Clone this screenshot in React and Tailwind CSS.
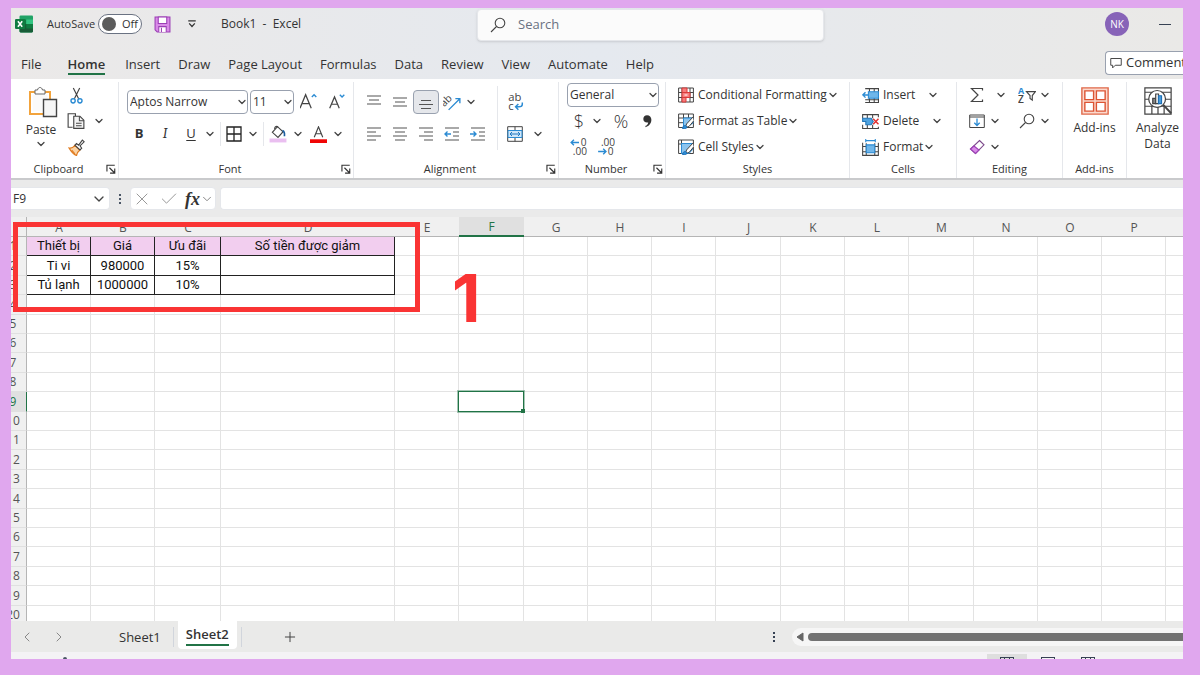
import clsx from 'clsx'
import { ChevronDown, ChevronLeft, ChevronRight, Check, X, Plus } from 'lucide-react'

const TABS = ['File', 'Home', 'Insert', 'Draw', 'Page Layout', 'Formulas', 'Data', 'Review', 'View', 'Automate', 'Help']

const COLUMNS = [
  { name: 'A', width: 'w-[64px]' },
  { name: 'B', width: 'w-[64px]' },
  { name: 'C', width: 'w-[66px]' },
  { name: 'D', width: 'w-[174px]' },
  { name: 'E', width: 'w-[64px]' },
  { name: 'F', width: 'w-[65px]' },
  { name: 'G', width: 'w-[64px]' },
  { name: 'H', width: 'w-[64px]' },
  { name: 'I', width: 'w-[64px]' },
  { name: 'J', width: 'w-[65px]' },
  { name: 'K', width: 'w-[64px]' },
  { name: 'L', width: 'w-[64px]' },
  { name: 'M', width: 'w-[65px]' },
  { name: 'N', width: 'w-[64px]' },
  { name: 'O', width: 'w-[64px]' },
  { name: 'P', width: 'w-[64px]' },
  { name: 'Q', width: 'w-[64px]' },
]

const DATA = [
  ['Thiết bị', 'Giá', 'Ưu đãi', 'Số tiền được giảm'],
  ['Ti vi', '980000', '15%', ''],
  ['Tủ lạnh', '1000000', '10%', ''],
]

const ROWS = Array.from({ length: 20 }, (_, i) => i + 1)

const Svg = ({ size = 16, children, ...rest }) => (
  <svg
    width={size}
    height={size}
    viewBox="0 0 16 16"
    fill="none"
    stroke="#444"
    className="shrink-0"
    aria-hidden="true"
    {...rest}
  >
    {children}
  </svg>
)

const ExcelIcon = () => (
  <Svg size={18} stroke="none">
    <rect x="4" y="0.5" width="12" height="15" rx="1" fill="#21a366" />
    <path d="M4 4h6v4H4z" fill="#107c41" />
    <path d="M10 4h6v4h-6z" fill="#33c481" />
    <path d="M4 8h12v6.500a1 1 0 0 1-1 1H5a1 1 0 0 1-1-1z" fill="#185c37" />
    <path d="M10 8h6v4h-6z" fill="#107c41" />
    <rect x="0" y="3.500" width="9" height="9" rx="1" fill="#107c41" />
    <path d="M2.600 5.500l3.800 5M6.400 5.500l-3.800 5" stroke="#fff" strokeWidth="1.400" />
  </Svg>
)

const SaveIcon = () => (
  <Svg size={17} stroke="#9b3fb5">
    <path d="M1 1h14v14H3l-2-2z" fill="#d98be8" />
    <path d="M4 1h8v6H4z" fill="#fff" />
    <path d="M4.500 15v-5h7v5" fill="#fff" />
    <path d="M7 11v4" />
  </Svg>
)

const QuickAccessIcon = () => (
  <Svg size={10} stroke="#333" strokeWidth="2">
    <path d="M2 3h12M3.500 7l4.500 5 4.500-5" />
  </Svg>
)

const SearchIcon = ({ size = 16 }) => (
  <Svg size={size} strokeWidth="1.100">
    <circle cx="10" cy="6" r="4.800" />
    <path d="M6.500 9.500L1 15" />
  </Svg>
)

const CommentIcon = () => (
  <Svg size={12} strokeWidth="1.300">
    <path d="M1 2h14v9H7l-3.500 3.500V11H1z" />
  </Svg>
)

const PasteIcon = () => (
  <svg width="34" height="32" viewBox="-4 0 34 32" fill="none" aria-hidden="true">
    <path d="M2 6h20v22H2z" fill="#fff" stroke="#f2a33c" strokeWidth="2" />
    <path d="M4.500 8.500h15v17h-15z" fill="#fafafa" />
    <path d="M7 8V4h2.500c.5-2 1.500-2.500 2.500-2.500s2 .5 2.500 2.500H17v4z" fill="#fff" stroke="#666" />
    <path d="M15.500 13.500h13v17h-13z" fill="#f6f6f6" stroke="#444" strokeWidth="1.400" />
  </svg>
)

const CutIcon = () => (
  <Svg size={17}>
    <path d="M5 1l5 10M11 1L6 11" strokeWidth="1.100" />
    <circle cx="4.800" cy="13" r="2" stroke="#2b8bd3" strokeWidth="1.300" />
    <circle cx="11.200" cy="13" r="2" stroke="#2b8bd3" strokeWidth="1.300" />
  </Svg>
)

const CopyIcon = () => (
  <Svg size={18}>
    <path d="M5 13.500H1v-12h6.500v2" />
    <path d="M6 3.800h5.500L15 7.300v7.200H6z" fill="#f4f4f4" />
    <path d="M11 4v3.800h4M8 10h5M8 12.300h5" strokeWidth="0.900" />
  </Svg>
)

const PainterIcon = () => (
  <Svg size={17}>
    <path d="M1 8.500c2.200.4 4-.6 5.500-2.500l4.500 4.500c-1.600 1.200-2.800 2.800-3 5-2.800-.8-5-3.500-7-7z" fill="#fbd3a4" stroke="#e07b1f" strokeWidth="1.200" />
    <path d="M3.500 10.500l3 3.500" stroke="#e07b1f" />
    <path d="M6.500 5.800l1.500-1.500 2 1.500L13.500 1l1.700 1.600-3.900 3.900 1.600 2.200-1.600 1.600z" fill="#fff" />
  </Svg>
)

const FontSizeIcon = ({ up }) => (
  <Svg size={18}>
    <path d={up ? 'M0 13.500L5 1.500l5 12M1.700 9.500h6.600' : 'M1.500 13.500L5.800 3.500l4.200 10M3 10h5.500'} strokeWidth="1.100" />
    <path d={up ? 'M10.500 3.500L12.500 1.500l2 2' : 'M10.500 1.500L12.500 3.500l2-2'} stroke="#2b8bd3" strokeWidth="1.200" />
  </Svg>
)

const BordersIcon = () => (
  <Svg stroke="#222" strokeWidth="1.300">
    <path d="M1 1h14v14H1zM8 1v14M1 8h14" />
  </Svg>
)

const FillIcon = () => (
  <Svg size={18}>
    <path d="M7.500 1.500l5 4.500-4.500 5-5-4.500z" />
    <path d="M5 3.500c0-2 2-3 3-1.500" />
    <path d="M12 5c1.600.5 2 2.500 1.700 5" stroke="#1d5fa0" strokeWidth="1.500" />
    <path d="M0.500 12h15v3.500h-15z" fill="#eabff0" stroke="none" />
  </Svg>
)

const FontColorIcon = () => (
  <Svg size={17}>
    <path d="M4 10.500L8 .8l4 9.700M5.500 7.300h5" strokeWidth="1.100" />
    <path d="M0 12.500h16v3.500H0z" fill="#f00505" stroke="none" />
  </Svg>
)

const LINES = {
  top: 'M1 2h14M3 6h10M1 10h14',
  middle: 'M1 4h14M3 8h10M1 12h14',
  bottom: 'M3 6.500h10M1 10.500h14M3 14.500h10',
  left: 'M1 2h14M1 6h9M1 10h14M1 14h9',
  center: 'M1 2h14M3 6h10M1 10h14M3 14h10',
  right: 'M1 2h14M6 6h9M1 10h14M6 14h9',
}

const LinesIcon = ({ kind }) => (
  <Svg stroke="#555" strokeWidth="1.200">
    <path d={LINES[kind]} />
  </Svg>
)

const IndentIcon = ({ out }) => (
  <Svg stroke="#555" strokeWidth="1.200">
    <path d="M1 2h14M9 6h6M9 10h6M1 14h14" />
    <path d={out ? 'M7 8H1M3.500 5.500L1 8l2.500 2.500' : 'M0 8h6M3.500 5.500L6 8l-2.500 2.500'} stroke="#2b8bd3" strokeWidth="1.400" />
  </Svg>
)

const OrientationIcon = () => (
  <Svg size={18}>
    <text x="-2" y="9" fontSize="9" fontFamily="Open Sans" fill="#444" stroke="none" transform="rotate(-45 4 7)">ab</text>
    <path d="M5 15L14.500 5.500M11 5h4v4" stroke="#2b8bd3" strokeWidth="1.200" />
  </Svg>
)

const WrapIcon = () => (
  <Svg size={18}>
    <text x="2" y="7.500" fontSize="10" fontFamily="Open Sans" fill="#444" stroke="none">ab</text>
    <text x="2" y="15" fontSize="10" fontFamily="Open Sans" fill="#444" stroke="none">c</text>
    <path d="M14.500 8.500v1.500c0 1.500-1 2.300-3 2.300H8.500M11 9.800l-2.500 2.500 2.500 2.500" stroke="#2b8bd3" strokeWidth="1.300" />
  </Svg>
)

const MergeIcon = () => (
  <Svg>
    <path d="M.7.7h14.600v14.600H.7zM8 .7v3.500M8 12v3.500" />
    <path d="M1 4.500h14v7H1z" fill="#cfe6f8" stroke="#2b8bd3" />
    <path d="M3 8h10M5 6L3 8l2 2M11 6l2 2-2 2" stroke="#1f77c0" />
  </Svg>
)

const DecimalIcon = ({ more }) => (
  <Svg size={18}>
    <text x={more ? 9.500 : 3.500} y="7" fontSize="9" fontFamily="Open Sans" fill="#444" stroke="none">{more ? '0' : '.00'}</text>
    <text x={more ? 2.500 : 9.500} y="15" fontSize="9" fontFamily="Open Sans" fill="#444" stroke="none">{more ? '.00' : '0'}</text>
    <path d={more ? 'M8 4H1M3.500 1.500L1 4 3.500 6.500' : 'M1 12h7M5.500 9.500L8 12 5.500 14.500'} stroke="#2b8bd3" strokeWidth="1.200" />
  </Svg>
)

const ConditionalIcon = () => (
  <Svg>
    <path d="M.6 1h14.800v14H.6zM.6 5.500h14.800M.6 10.500h14.800M4 1v14M12 1v14" />
    <path d="M4 1h5v4.500H4zM4 5.500h8v5H4zM4 10.500h4V15H4z" fill="#f77c7c" stroke="#d83b3b" />
    <path d="M6.500 8h3" stroke="#fff" />
  </Svg>
)

const FormatTableIcon = ({ filled }) => (
  <Svg>
    <path d={filled ? 'M.6 1h14.800v13.500H.6zM.6 5h3M3.500 1v13.500' : 'M.6 1h14.800v13.500H.6zM.6 5h14.800M.6 9.700H10M5.500 1v13.500M10.500 1v6'} />
    <path d={filled ? 'M3.500 4.500h11v6L11 14.500H3.500z' : 'M5.500 5h9.500v5L8 14.500H5.500z'} fill="#8cc4ee" stroke="#2b8bd3" />
    <path d="M15.500 3.500L8.500 11l-1 3.500 3.500-1 5-6z" fill="#fff" />
    <path d="M4.500 15.500c0-2 1.500-3.200 3-3l1.500 1.500c0 1.500-2 2-4.500 1.500z" fill="#2b8bd3" stroke="#1f6fb5" />
  </Svg>
)

const InsertCellsIcon = () => (
  <Svg size={17}>
    <path d="M3 1.500h12.500v13H3M7 1.500v13M11.500 1.500v13M3 12h12.500" />
    <path d="M6 4.500h9.500v6H6z" fill="#6fb6ea" stroke="#2b8bd3" />
    <path d="M6 7.500H.8M3.300 5L.8 7.500 3.300 10" stroke="#2b8bd3" strokeWidth="1.300" />
  </Svg>
)

const DeleteCellsIcon = () => (
  <Svg size={17}>
    <path d="M.6 5V1.500h14.800V4M.6 11v3.500h14.800V13M5 1.500V5M10 1.500V5M5 11v3.500M10 11v3.500" />
    <path d="M.6 5h8l2 3-2 3h-5V8h-3z" fill="#4fa3e0" stroke="#2376b8" />
    <path d="M10.500 5.500l5 5M15.500 5.500l-5 5" stroke="#e03030" strokeWidth="1.400" />
  </Svg>
)

const FormatCellsIcon = () => (
  <Svg size={17}>
    <path d="M.6 3.500v11.900h14.800V3.500M.6 7h14.800M.6 12h14.800M4 4v11.400M12 4v11.400" />
    <path d="M4 5.500h8V13H4z" fill="#6fb6ea" stroke="#2b8bd3" />
    <path d="M3.500 1.500h9M3.500 0v3M12.500 0v3" stroke="#2b8bd3" />
  </Svg>
)

const SumIcon = () => (
  <Svg strokeWidth="1.200">
    <path d="M13.500 3.500V1.500h-11L9 8l-6.500 6.500h11v-2" />
  </Svg>
)

const SortIcon = () => (
  <Svg size={18}>
    <text x="0" y="7" fontSize="8" fontFamily="Open Sans" fontWeight="700" fill="#2b8bd3" stroke="none">A</text>
    <text x="0" y="15.500" fontSize="9" fontFamily="Open Sans" fontWeight="600" fill="#444" stroke="none">Z</text>
    <path d="M7.500 5h8L12.700 8.500v4l-2-1.500V8.500z" />
  </Svg>
)

const FillDownIcon = () => (
  <Svg>
    <path d="M.7 2h14.600v12.500H.7zM.7 4h14.600" />
    <path d="M8 5.500v7M5.300 9.800L8 12.500l2.700-2.700" stroke="#2b8bd3" strokeWidth="1.300" />
  </Svg>
)

const EraserIcon = () => (
  <Svg strokeWidth="1.100">
    <path d="M10.500 1.500l4.500 4.300-8.500 8.700-5-4.500z" fill="#fff" stroke="#7d4a8c" />
    <path d="M5 7l5 4-3.500 3.500-5-4.500z" fill="#d98be8" stroke="#9b3fb5" />
  </Svg>
)

const AddInsIcon = () => (
  <Svg size={28} stroke="#dc5433" strokeWidth="0.800">
    <path d="M.5.500h15v15H.5z" fill="#fbd9cd" stroke="#e0694a" />
    <path d="M2.200 2.200h5v5h-5zM8.800 2.200h5v5h-5zM2.200 8.800h5v5h-5zM8.800 8.800h5v5h-5z" fill="#fff" />
  </Svg>
)

const AnalyzeIcon = () => (
  <Svg size={28} strokeWidth="0.700">
    <path d="M.5.500h15v15H.5zM.5 3h15M.5 7h15M.5 11h15M4.500 11v4.500M8 11v4.500M11.500 11v4.500" />
    <circle cx="7.500" cy="6.800" r="4.800" fill="#fff" />
    <path d="M5 6.500h1.700v3H5z" fill="#888" />
    <path d="M6.700 4h1.600v5.500H6.700z" fill="#fff" />
    <path d="M8.300 5h1.700v4.500H8.300z" fill="#4fa3e0" stroke="#1f6fb5" />
    <path d="M11 10.200l4.500 4.800" strokeWidth="1.100" />
  </Svg>
)

const LauncherIcon = () => (
  <Svg size={10} stroke="#333" strokeWidth="1.800">
    <path d="M1.500 12V2H14M5.500 6l8 8M14 7v7.500H6.500" />
  </Svg>
)

const Caret = ({ label = 'More options', className }) => (
  <button type="button" aria-label={label} className={clsx('flex h-5 w-3 shrink-0 items-center justify-center', className)}>
    <ChevronDown size={12} strokeWidth={2.5} color="#444" />
  </button>
)

const Tool = ({ label, width = 'w-[26px]', active, children }) => (
  <button
    type="button"
    aria-label={label}
    className={clsx('flex h-6 shrink-0 items-center justify-center rounded', width, active && 'border border-gray-400 bg-gray-200')}
  >
    {children}
  </button>
)

const Group = ({ title, width, launcher, children }) => (
  <section className={clsx('flex shrink-0 flex-col border-r border-gray-200', width)}>
    <div className="h-[78px]">{children}</div>
    <div className="flex h-[18px] items-center">
      <h2 className="flex-1 text-center text-[11px]">{title}</h2>
      {
        launcher &&
        (
          <button type="button" aria-label={`${title} settings`} className="w-3">
            <LauncherIcon />
          </button>
        )
      }
    </div>
  </section>
)

const Dropdown = ({ label, value, width }) => (
  <div className={clsx('relative shrink-0', width)}>
    <select
      aria-label={label}
      defaultValue={value}
      className="block h-6 w-full appearance-none rounded border border-gray-400 bg-white pl-0.5 text-xs"
    >
      <option>{value}</option>
    </select>
    <ChevronDown size={12} strokeWidth={2.5} color="#444" className="pointer-events-none absolute right-0 top-1.5" />
  </div>
)

const LabelledTool = ({ icon, text, gap }) => (
  <div className="flex h-[26px] items-center">
    <button type="button" className="flex items-center gap-1 whitespace-nowrap">
      {icon}
      {text}
    </button>
    <Caret label={`${text} options`} className={gap} />
  </div>
)

const Divider = ({ className }) => <div className={clsx('w-px shrink-0 bg-gray-200', className)} />

const TitleBar = () => (
  <header className="flex h-10 items-start">
    <div className="flex h-8 w-[466px] shrink-0 items-center pl-1">
      <ExcelIcon />
      <span className="ml-3.5 w-[51px] text-[11px]">AutoSave</span>
      <button
        type="button"
        role="switch"
        aria-checked="false"
        aria-label="AutoSave"
        className="flex h-5 w-11 items-center gap-1.5 rounded-full border border-gray-500 bg-white pl-[3px] text-[11px]"
      >
        <span className="h-3.5 w-3.5 rounded-full bg-[#5c5c5c]" />
        Off
      </button>
      <button type="button" aria-label="Save" className="ml-3"><SaveIcon /></button>
      <button type="button" aria-label="Customize toolbar" className="ml-4"><QuickAccessIcon /></button>
      <h1 className="ml-6 whitespace-pre text-xs">Book1  -  Excel</h1>
    </div>
    <label className="mt-px flex h-8 w-[347px] shrink-0 items-center gap-3 rounded border border-gray-200 bg-[#fbfbfb] px-3 shadow">
      <SearchIcon />
      <input type="search" placeholder="Search" aria-label="Search" className="w-full text-[13px] outline-none placeholder:text-gray-500" />
    </label>
    <div className="ml-auto flex h-8 items-center">
      <button type="button" className="h-6 w-6 rounded-full bg-[#8763b8] text-[10px] text-white">NK</button>
      <button type="button" aria-label="Minimize" className="ml-[30px] mr-3 flex h-4 w-3 items-center">
        <span className="h-px w-full bg-gray-700" />
      </button>
    </div>
  </header>
)

const TabBar = () => (
  <nav className="flex h-[31px] items-start pl-2.5 text-[13px]">
    <div className="flex h-full gap-[18px] whitespace-nowrap">
      {TABS.map(t => (
        <a
          key={t}
          href="#"
          className={clsx('mt-1.5 h-[21px] leading-5', t === 'Home' && 'ml-2 mr-0.5 border-b-2 border-[#217346] font-semibold')}
        >
          {t}
        </a>
      ))}
    </div>
    <button
      type="button"
      className="ml-auto mt-[3px] flex h-6 w-[78px] items-center gap-1 overflow-hidden rounded-l border border-r-0 border-gray-400 bg-white pl-1"
    >
      <CommentIcon />
      Comment
    </button>
  </nav>
)

const Ribbon = () => (
  <div className="flex h-[101px] shrink-0 overflow-hidden border-b-2 border-[#c9cacc] bg-white pt-[3px] text-xs">
    <Group title="Clipboard" width="w-[108px]" launcher>
      <div className="flex h-full pl-4">
        <div className="flex w-7 flex-col items-center pt-1">
          <button type="button" className="flex flex-col items-center">
            <PasteIcon />
            <span className="mt-1">Paste</span>
          </button>
          <Caret label="Paste options" className="-mt-1" />
        </div>
        <div className="ml-2 flex flex-col">
          <div className="flex h-[26px] items-center"><Tool label="Cut"><CutIcon /></Tool></div>
          <div className="flex h-[26px] items-center">
            <Tool label="Copy"><CopyIcon /></Tool>
            <Caret label="Copy options" className="ml-1" />
          </div>
          <div className="flex h-[26px] items-center"><Tool label="Format Painter"><PainterIcon /></Tool></div>
        </div>
      </div>
    </Group>

    <Group title="Font" width="w-[235px]" launcher>
      <div className="pl-[7px] pt-1">
        <div className="flex h-8 items-center gap-0.5 pl-px">
          <Dropdown label="Font" value="Aptos Narrow" width="w-[121px]" />
          <Dropdown label="Font size" value="11" width="w-[44px]" />
          <Tool label="Increase font size"><FontSizeIcon up /></Tool>
          <Tool label="Decrease font size"><FontSizeIcon /></Tool>
        </div>
        <div className="flex h-8 items-center">
          <Tool label="Bold"><b className="text-[13px]">B</b></Tool>
          <Tool label="Italic"><i className="font-serif text-sm">I</i></Tool>
          <Tool label="Underline"><u className="text-[13px] underline-offset-2">U</u></Tool>
          <Caret label="Underline style" />
          <Divider className="ml-1 h-6" />
          <Tool label="Borders"><BordersIcon /></Tool>
          <Caret label="Border style" />
          <Divider className="ml-1 h-6" />
          <Tool label="Fill color" width="w-7"><FillIcon /></Tool>
          <Caret label="Fill color options" />
          <Tool label="Font color" width="w-7"><FontColorIcon /></Tool>
          <Caret label="Font color options" />
        </div>
      </div>
    </Group>

    <Group title="Alignment" width="w-[205px]" launcher>
      <div className="flex pl-[7px] pt-1">
        <div className="w-[136px]">
          <div className="flex h-8 items-center">
            <Tool label="Top align"><LinesIcon kind="top" /></Tool>
            <Tool label="Middle align"><LinesIcon kind="middle" /></Tool>
            <Tool label="Bottom align" active><LinesIcon kind="bottom" /></Tool>
            <Tool label="Orientation"><OrientationIcon /></Tool>
            <Caret label="Orientation options" />
          </div>
          <div className="flex h-8 items-center">
            <Tool label="Align left"><LinesIcon kind="left" /></Tool>
            <Tool label="Center"><LinesIcon kind="center" /></Tool>
            <Tool label="Align right"><LinesIcon kind="right" /></Tool>
            <Tool label="Decrease indent"><IndentIcon out /></Tool>
            <Tool label="Increase indent"><IndentIcon /></Tool>
          </div>
        </div>
        <Divider className="h-16" />
        <div className="pl-1">
          <div className="flex h-8 items-center"><Tool label="Wrap text"><WrapIcon /></Tool></div>
          <div className="flex h-8 items-center">
            <Tool label="Merge and center"><MergeIcon /></Tool>
            <Caret label="Merge options" className="ml-1" />
          </div>
        </div>
      </div>
    </Group>

    <Group title="Number" width="w-[107px]" launcher>
      <div className="pl-2">
        <div className="flex h-[26px] items-center"><Dropdown label="Number format" value="General" width="w-[92px]" /></div>
        <div className="flex h-[26px] items-center">
          <Tool label="Accounting format" width="w-6"><span className="text-lg font-light">$</span></Tool>
          <Caret label="Currency options" />
          <Tool label="Percent style" width="w-9"><span className="text-lg font-light">%</span></Tool>
          <Tool label="Comma style" width="w-4">
            <Svg size={14} stroke="none">
              <path d="M8 1.500c3 0 5 2 5 5.200 0 4-2.500 7-6.500 8.300l-.5-1.200c2.200-1 3.300-2.600 3.400-4.200C6 10.200 3.800 8.500 3.800 5.800 3.800 3.300 5.500 1.500 8 1.500z" fill="#333" />
            </Svg>
          </Tool>
        </div>
        <div className="flex h-[26px] items-center">
          <Tool label="Increase decimal" width="w-6"><DecimalIcon more /></Tool>
          <Tool label="Decrease decimal" width="w-[30px]"><DecimalIcon /></Tool>
        </div>
      </div>
    </Group>

    <Group title="Styles" width="w-[184px]">
      <div className="pl-3">
        <LabelledTool icon={<ConditionalIcon />} text="Conditional Formatting" />
        <LabelledTool icon={<FormatTableIcon />} text="Format as Table" />
        <LabelledTool icon={<FormatTableIcon filled />} text="Cell Styles" />
      </div>
    </Group>

    <Group title="Cells" width="w-[107px]">
      <div className="pl-3">
        <LabelledTool icon={<InsertCellsIcon />} text="Insert" gap="ml-3" />
        <LabelledTool icon={<DeleteCellsIcon />} text="Delete" gap="ml-3" />
        <LabelledTool icon={<FormatCellsIcon />} text="Format" />
      </div>
    </Group>

    <Group title="Editing" width="w-[106px]">
      <div className="flex pl-2">
        <div className="w-[50px]">
          <div className="flex h-[26px] items-center">
            <Tool label="AutoSum" width="w-6"><SumIcon /></Tool>
            <Caret label="AutoSum options" className="ml-1.5" />
          </div>
          <div className="flex h-[26px] items-center">
            <Tool label="Fill" width="w-6"><FillDownIcon /></Tool>
            <Caret label="Fill options" />
          </div>
          <div className="flex h-[26px] items-center">
            <Tool label="Clear" width="w-6"><EraserIcon /></Tool>
            <Caret label="Clear options" />
          </div>
        </div>
        <div>
          <div className="flex h-[26px] items-center">
            <Tool label="Sort and filter" width="w-6"><SortIcon /></Tool>
            <Caret label="Sort options" />
          </div>
          <div className="flex h-[26px] items-center">
            <Tool label="Find and select" width="w-6"><SearchIcon /></Tool>
            <Caret label="Find options" />
          </div>
        </div>
      </div>
    </Group>

    <Group title="Add-ins" width="w-[64px]">
      <button type="button" className="flex w-full flex-col items-center gap-[5px] pt-[5px] leading-4">
        <AddInsIcon />
        Add-ins
      </button>
    </Group>

    <button type="button" className="flex w-[61px] shrink-0 flex-col items-center gap-[5px] self-start pt-[5px] leading-4">
      <AnalyzeIcon />
      <span>Analyze<br />Data</span>
    </button>
  </div>
)

const FormulaBar = () => (
  <div className="flex h-[37px] shrink-0 items-start pt-[7px]">
    <div className="flex h-[23px] w-[99px] shrink-0 items-center rounded-r border border-l-0 border-gray-200 bg-white pr-0.5">
      <input aria-label="Name box" defaultValue="F9" className="w-full min-w-0 pl-0.5 text-xs outline-none" />
      <ChevronDown size={16} color="#444" className="shrink-0" />
    </div>
    <div className="flex h-[23px] w-5 shrink-0 flex-col items-center justify-center gap-0.5">
      <span className="h-0.5 w-0.5 bg-gray-600" />
      <span className="h-0.5 w-0.5 bg-gray-600" />
      <span className="h-0.5 w-0.5 bg-gray-600" />
    </div>
    <div className="flex h-[23px] w-[86px] shrink-0 items-center justify-between rounded border border-gray-200 bg-white px-px">
      <button type="button" aria-label="Cancel"><X size={20} strokeWidth={1.2} color="#999" /></button>
      <button type="button" aria-label="Enter"><Check size={20} strokeWidth={1.2} color="#999" /></button>
      <button type="button" aria-label="Insert function" className="flex items-center font-['Liberation_Serif'] text-lg font-bold italic leading-5">
        fx
        <ChevronDown size={14} strokeWidth={1.5} color="#777" />
      </button>
    </div>
    <input aria-label="Formula" className="ml-1 h-[23px] min-w-0 flex-1 rounded-l border border-r-0 border-gray-200 bg-white px-2 text-xs outline-none" />
  </div>
)

const Cell = ({ row, column, index }) => {
  const inData = row <= 3 && index <= 3
  const selected = row === 9 && column === 'F'

  return (
    <td
      className={clsx(
        'border-b border-r p-0 text-center leading-[18px]',
        inData ? 'border-[#222] text-[#111]' : 'border-[#e3e3e3]',
        inData && row === 1 && 'bg-[#f2ceef]',
        selected && 'relative',
      )}
    >
      {inData && DATA[row - 1][index]}
      {
        selected &&
        (
          <div className="absolute -inset-px border border-[#217346] outline outline-[#217346]/40">
            <span className="absolute -bottom-0.5 -right-0.5 h-1 w-1 bg-[#217346]" />
          </div>
        )
      }
    </td>
  )
}

const Sheet = () => (
  <main className="relative min-h-0 flex-1 overflow-hidden bg-white">
    <table className="-ml-[11px] w-max border-separate border-spacing-0 font-['Roboto','Noto_Sans',sans-serif] text-[13px] leading-[18px]">
      <colgroup>
        <col className="w-[27px]" />
        {COLUMNS.map(c => <col key={c.name} className={c.width} />)}
      </colgroup>
      <thead className="font-['Open_Sans','Noto_Sans',sans-serif] text-xs text-[#555]">
        <tr className="h-5 bg-[#f0f0f0]">
          <th aria-label="Select all" className="border-b border-r border-[#b5b5b5] p-0" />
          {COLUMNS.map(({ name, width }) => (
            <th
              key={name}
              scope="col"
              className={clsx(
                'p-0 pt-0.5 font-normal leading-4',
                width,
                name === 'F' ? 'border-b-2 border-[#217346] bg-[#e0e0e0] text-[#217346]' : 'border-b border-[#b5b5b5]',
              )}
            >
              {name}
            </th>
          ))}
        </tr>
      </thead>
      <tbody>
        {ROWS.map(row => (
          <tr key={row} className={row % 5 === 2 || row % 5 === 4 ? 'h-5' : 'h-[19px]'}>
            <th
              scope="row"
              className={clsx(
                "border-b border-r p-0 font-['Open_Sans','Noto_Sans',sans-serif] text-xs font-normal leading-[18px]",
                row === 9 ? 'border-b-[#e0e0e0] border-r-[#217346] bg-[#e0e0e0] text-[#217346]' : 'border-b-[#e0e0e0] border-r-[#b5b5b5] bg-[#f0f0f0] text-[#555]',
              )}
            >
              {row}
            </th>
            {COLUMNS.map((c, i) => <Cell key={c.name} row={row} column={c.name} index={i} />)}
          </tr>
        ))}
      </tbody>
    </table>
    <div className="absolute left-0.5 top-[5px] h-[90px] w-[407px] border-[5px] border-[#fa3434]" />
    <strong className="absolute left-[441px] top-[47px] font-['Inter'] text-[66px] font-bold leading-[68px] text-[#fa3434]">1</strong>
  </main>
)

const SheetBar = () => (
  <footer className="flex h-[31px] shrink-0 items-center bg-[#eaeae9] text-[13px]">
    <button type="button" aria-label="Previous sheet" className="ml-2"><ChevronLeft size={16} strokeWidth={1.5} color="#888" /></button>
    <button type="button" aria-label="Next sheet" className="ml-4"><ChevronRight size={16} strokeWidth={1.5} color="#888" /></button>
    <a href="#" className="ml-[52px] pt-0.5">Sheet1</a>
    <Divider className="ml-3 h-5 !bg-gray-300" />
    <a href="#" className="ml-1 h-7 self-start rounded-b bg-white px-2 pt-[3px] font-semibold">
      <span className="block h-[22px] border-b-2 border-[#217346] leading-5">Sheet2</span>
    </a>
    <Divider className="ml-1 h-5 !bg-gray-300" />
    <button type="button" aria-label="New sheet" className="ml-10"><Plus size={16} strokeWidth={1.5} color="#444" /></button>
    <div className="ml-auto flex w-[419px] items-center">
      <div className="mr-2 flex w-5 flex-col items-center gap-0.5">
        <span className="h-0.5 w-0.5 bg-gray-700" />
        <span className="h-0.5 w-0.5 bg-gray-700" />
        <span className="h-0.5 w-0.5 bg-gray-700" />
      </div>
      <div className="flex h-[18px] flex-1 items-center gap-1 rounded-l-full bg-[#f6f6f6] pl-1">
        <svg width="8" height="10" viewBox="0 0 8 10" aria-hidden="true"><path d="M7 1v8L1 5z" fill="#666" stroke="#666" /></svg>
        <div className="h-2 flex-1 rounded-l-full bg-[#727272]" />
      </div>
    </div>
  </footer>
)

const StatusBar = () => (
  <div className="flex h-[7px] shrink-0 items-end overflow-hidden bg-[#f4f2f5]">
    <span className="ml-[52px] h-0.5 w-1 rounded-t-full bg-gray-600" />
    <div className="ml-auto mr-[88px] flex items-end">
      <div className="flex h-[5px] w-10 items-end justify-center bg-[#dedede]">
        <span className="flex h-0.5 w-3.5 justify-evenly border-x border-t border-gray-700"><i className="w-px bg-gray-700" /><i className="w-px bg-gray-700" /></span>
      </div>
      <span className="ml-3.5 h-0.5 w-3.5 border-x border-t border-gray-700" />
      <span className="ml-[26px] flex h-0.5 w-3.5 justify-evenly border-x border-t border-gray-700"><i className="w-px bg-gray-700" /><i className="w-px bg-gray-700" /></span>
    </div>
  </div>
)

export default () => (
  <div className="h-screen bg-[#e0a7ee] pb-4 pl-[11px] pr-[17px] pt-2">
    <div className="flex h-full flex-col overflow-hidden bg-[#eaeaea] font-['Open_Sans','Noto_Sans',sans-serif] text-[#333]">
      <div className="shrink-0 bg-linear-to-r from-[#ebe9e8] via-[#e5e9ef] to-[#eae9e7]">
        <TitleBar />
        <TabBar />
      </div>
      <Ribbon />
      <FormulaBar />
      <Sheet />
      <SheetBar />
      <StatusBar />
    </div>
  </div>
)
